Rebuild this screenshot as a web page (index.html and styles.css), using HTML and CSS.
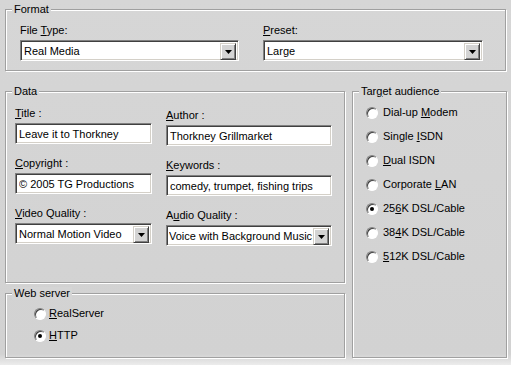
FILE: index.html
```html
<!DOCTYPE html>
<html lang="en">
<head>
    <meta charset="UTF-8">
    <title>Export Settings</title>
    <link rel="stylesheet" href="styles.css">
</head>
<body>
    <div class="dialog">
        <div class="group format">
            <span class="caption">Format</span>
            <div class="field">
                <div class="label">File <u>T</u>ype:</div>
                <div class="combo"><span class="value">Real Media</span><span class="drop"><svg width="7" height="4" viewBox="0 0 7 4"><polygon points="0,0 7,0 3.5,4" fill="#000"/></svg></span></div>
            </div>
            <div class="field">
                <div class="label"><u>P</u>reset:</div>
                <div class="combo"><span class="value">Large</span><span class="drop"><svg width="7" height="4" viewBox="0 0 7 4"><polygon points="0,0 7,0 3.5,4" fill="#000"/></svg></span></div>
            </div>
        </div>

        <div class="left">
            <div class="group data">
                <span class="caption">Data</span>
                <div class="col">
                    <div class="field">
                        <div class="label"><u>T</u>itle :</div>
                        <input class="edit" type="text" value="Leave it to Thorkney" readonly>
                    </div>
                    <div class="field">
                        <div class="label"><u>C</u>opyright :</div>
                        <input class="edit" type="text" value="© 2005 TG Productions" readonly>
                    </div>
                    <div class="field">
                        <div class="label"><u>V</u>ideo Quality :</div>
                        <div class="combo"><span class="value">Normal Motion Video</span><span class="drop"><svg width="7" height="4" viewBox="0 0 7 4"><polygon points="0,0 7,0 3.5,4" fill="#000"/></svg></span></div>
                    </div>
                </div>
                <div class="col right">
                    <div class="field">
                        <div class="label"><u>A</u>uthor :</div>
                        <input class="edit" type="text" value="Thorkney Grillmarket" readonly>
                    </div>
                    <div class="field">
                        <div class="label"><u>K</u>eywords :</div>
                        <input class="edit" type="text" value="comedy, trumpet, fishing trips" readonly>
                    </div>
                    <div class="field">
                        <div class="label">A<u>u</u>dio Quality :</div>
                        <div class="combo"><span class="value tight">Voice with Background Music</span><span class="drop"><svg width="7" height="4" viewBox="0 0 7 4"><polygon points="0,0 7,0 3.5,4" fill="#000"/></svg></span></div>
                    </div>
                </div>
            </div>

            <div class="group web">
                <span class="caption">Web server</span>
                <div class="radio"><span class="dot"></span><span><u>R</u>ealServer</span></div>
                <div class="radio"><span class="dot on"></span><span><u>H</u>TTP</span></div>
            </div>
        </div>

        <div class="group audience">
            <span class="caption">Tar<u>g</u>et audience</span>
            <div class="radio"><span class="dot"></span><span>Dial-up <u>M</u>odem</span></div>
            <div class="radio"><span class="dot"></span><span>Single <u>I</u>SDN</span></div>
            <div class="radio"><span class="dot"></span><span><u>D</u>ual ISDN</span></div>
            <div class="radio"><span class="dot"></span><span>Corporate <u>L</u>AN</span></div>
            <div class="radio"><span class="dot on"></span><span>25<u>6</u>K DSL/Cable</span></div>
            <div class="radio"><span class="dot"></span><span>38<u>4</u>K DSL/Cable</span></div>
            <div class="radio"><span class="dot"></span><span><u>5</u>12K DSL/Cable</span></div>
        </div>
    </div>
</body>
</html>
```

FILE: styles.css
```css
body {
    margin: 0;
    height: 365px;
    font: 11px "Liberation Sans", Arial, sans-serif;
    color: #000;
    background: linear-gradient(#d6d6d6, #d2d2d2 97%, #ececec);
}

.dialog {
    display: grid;
    grid-template-columns: 340px 155px;
    column-gap: 7px;
    row-gap: 20px;
    padding: 9px 0 0 5px;
}

/* etched group box */
.group {
    position: relative;
    border: 1px solid #a0a0a0;
    box-shadow: 1px 1px 0 #fff, inset 1px 1px 0 #fff;
}

.caption {
    position: absolute;
    top: -7px;
    left: 6px;
    padding: 0 2px;
    line-height: 13px;
    background: #d5d5d5;
    white-space: nowrap;
}

.label {
    line-height: 13px;
    margin-bottom: 3px;
    white-space: nowrap;
}

.format {
    grid-column: 1 / -1;
    width: 501px;
    box-sizing: border-box;
    display: grid;
    grid-template-columns: 219px 220px;
    column-gap: 24px;
    padding: 14px 0 9px 14px;
}

.left {
    display: flex;
    flex-direction: column;
    gap: 10px;
}

.data {
    display: grid;
    grid-template-columns: 137px 166px;
    column-gap: 14px;
    padding: 15px 0 36px 9px;
}

.col {
    display: flex;
    flex-direction: column;
    gap: 13px;
}

.col.right {
    margin-top: 2px;
}

/* sunken text box */
.edit {
    display: block;
    width: 100%;
    height: 21px;
    box-sizing: border-box;
    margin: 0;
    padding: 0 3px;
    font: inherit;
    color: #000;
    background: #fff;
    border: 1px solid;
    border-color: #808080 #fff #fff #808080;
    box-shadow: inset 1px 1px #404040, inset -1px -1px #d4d0c8;
    outline: none;
}

.combo {
    display: flex;
    height: 21px;
    box-sizing: border-box;
    padding: 2px;
    background: #fff;
    border: 1px solid;
    border-color: #808080 #fff #fff #808080;
    box-shadow: inset 1px 1px #404040, inset -1px -1px #d4d0c8;
}

.combo .value {
    flex: 1;
    min-width: 0;
    line-height: 17px;
    padding-left: 1px;
    overflow: hidden;
    white-space: nowrap;
}

.combo .value.tight {
    padding-left: 0;
}

.drop {
    display: flex;
    align-items: center;
    justify-content: center;
    width: 16px;
    height: 17px;
    box-sizing: border-box;
    background: #d4d4d4;
    border: 1px solid;
    border-color: #d4d0c8 #404040 #404040 #d4d0c8;
    box-shadow: inset 1px 1px #fff, inset -1px -1px #808080;
}

.web {
    display: flex;
    flex-direction: column;
    gap: 9px;
    padding: 13px 0 15px 28px;
}

.audience {
    display: flex;
    flex-direction: column;
    gap: 11px;
    padding: 14px 0 0 13px;
}

.radio {
    display: flex;
    align-items: center;
    gap: 5px;
    line-height: 13px;
    white-space: nowrap;
}

.web .radio {
    gap: 3px;
}

.dot {
    position: relative;
    width: 12px;
    height: 12px;
    box-sizing: border-box;
    border-radius: 50%;
    background: #fff;
    border: 1px solid;
    border-color: #808080 #fff #fff #808080;
    box-shadow: inset 1px 1px #404040;
}

.dot.on::after {
    content: "";
    position: absolute;
    left: 3px;
    top: 3px;
    width: 4px;
    height: 4px;
    border-radius: 50%;
    background: #000;
}
```
